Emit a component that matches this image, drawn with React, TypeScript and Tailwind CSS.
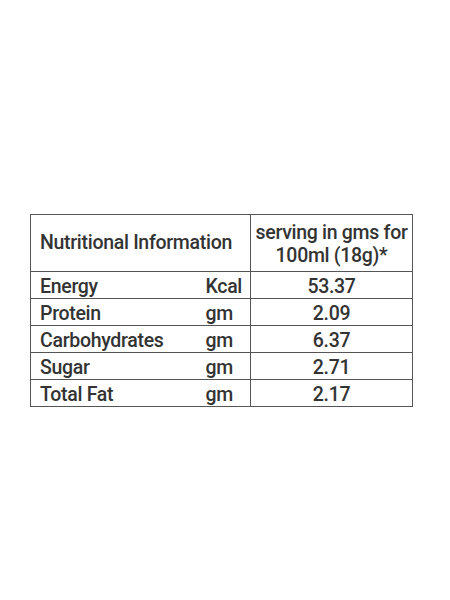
import React from "react";

const rows = [
  ["Energy", "Kcal", "53.37"],
  ["Protein", "gm", "2.09"],
  ["Carbohydrates", "gm", "6.37"],
  ["Sugar", "gm", "2.71"],
  ["Total Fat", "gm", "2.17"],
];

export default function App() {
  return (
    <div className="w-[450px] h-[600px] bg-white pt-[214px] pl-[30px]" style={{ fontFamily: "Roboto, 'Liberation Sans', sans-serif" }}>
      <table className="border-collapse table-fixed text-[#333] text-[19.5px] tracking-[-0.3px] font-medium w-[382px]">
        <colgroup>
          <col className="w-[175px]" />
          <col className="w-[45px]" />
          <col className="w-[162px]" />
        </colgroup>
        <tbody>
          <tr className="h-[57px]">
            <td colSpan={2} className="border-[1.5px] border-[#555] pl-[9px] whitespace-nowrap">Nutritional Information</td>
            <td className="border-[1.5px] border-[#555] text-center leading-[23px] whitespace-nowrap pt-[1px]">serving in gms for<br />100ml (18g)*</td>
          </tr>
          {rows.map(([a, b, c]) => (
            <tr key={a} className="h-[27px]">
              <td className="border-y-[1.5px] border-l-[1.5px] border-[#555] pl-[9px] leading-[22px] pt-[4px] pb-0">{a}</td>
              <td className="border-y-[1.5px] border-r-[1.5px] border-[#555] leading-[22px] pt-[4px] pb-0">{b}</td>
              <td className="border-[1.5px] border-[#555] text-center leading-[22px] pt-[4px] pb-0">{c}</td>
            </tr>
          ))}
        </tbody>
      </table>
    </div>
  );
}
